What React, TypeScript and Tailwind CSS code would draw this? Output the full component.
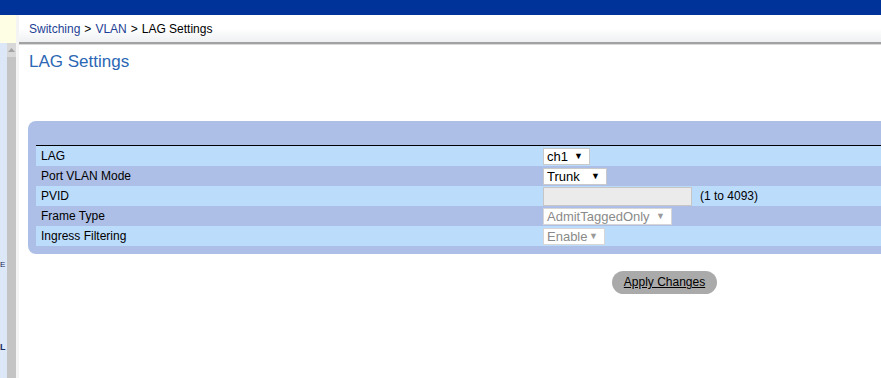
import React from 'react';

const rows = [
  { label: 'LAG', kind: 'lag' },
  { label: 'Port VLAN Mode', kind: 'mode' },
  { label: 'PVID', kind: 'pvid' },
  { label: 'Frame Type', kind: 'frame' },
  { label: 'Ingress Filtering', kind: 'ingress' },
];

const Select: React.FC<{ value: string; width: string; disabled?: boolean }> = ({ value, width, disabled }) => (
  <div
    className={`${width} h-[17px] bg-white border flex items-center justify-between pl-[3px] pr-[6px] text-[13px] leading-none ${
      disabled ? 'border-[#d6d6d6] text-[#8a8a8a]' : 'border-[#c9c9c9] text-black'
    }`}
  >
    <span>{value}</span>
    <span className={`text-[9px] ${disabled ? 'text-[#9a9a9a]' : 'text-black'}`}>▼</span>
  </div>
);

const App: React.FC = () => {
  const renderValue = (kind: string) => {
    switch (kind) {
      case 'lag':
        return <Select value="ch1" width="w-[47px]" />;
      case 'mode':
        return <Select value="Trunk" width="w-[64px]" />;
      case 'pvid':
        return (
          <div className="flex items-center gap-[8px]">
            <div className="w-[149px] h-[19px] bg-[#ebebeb] border border-[#c6c6c6]" />
            <span className="text-[12px] text-black">(1 to 4093)</span>
          </div>
        );
      case 'frame':
        return <Select value="AdmitTaggedOnly" width="w-[129px]" disabled />;
      default:
        return <Select value="Enable" width="w-[62px]" disabled />;
    }
  };

  return (
    <div className="w-[881px] h-[378px] flex flex-col overflow-hidden bg-white font-['Liberation_Sans',Arial,sans-serif]">
      {/* Top bar */}
      <div className="h-[15px] bg-[#003399] shrink-0" />

      <div className="flex flex-1 min-h-0">
        {/* Left nav edge */}
        <aside className="w-[16px] flex flex-col shrink-0">
          <div className="h-[28px] bg-[#fefee4]" />
          <div className="flex flex-1">
            <div className="w-[7px] bg-[#dce7f7] flex flex-col items-start">
              <span className="mt-[218px] text-[8px] leading-none text-[#1b2a5c]">E</span>
              <span className="mt-[74px] text-[9px] font-bold leading-none text-[#1b2a5c]">L</span>
            </div>
            <div className="w-[9px] bg-[#c4c4c4] flex flex-col items-center">
              <div className="w-full h-[14px] bg-[#d8d8d8] flex items-center justify-center">
                <svg width="7" height="4" viewBox="0 0 7 4">
                  <path d="M0 4 L3.5 0 L7 4 Z" fill="#a3a3a3" />
                </svg>
              </div>
            </div>
          </div>
        </aside>

        {/* Main */}
        <main className="flex-1 flex flex-col border-l-[3px] border-[#f4f4f4]">
          {/* Breadcrumb */}
          <div className="h-[27px] bg-gradient-to-b from-white via-white to-[#eef0f2] flex items-center pl-[10px] text-[12px]">
            <span className="text-[#1e3f96]">Switching</span>
            <span className="text-black mx-[4px]">&gt;</span>
            <span className="text-[#1e3f96]">VLAN</span>
            <span className="text-black mx-[4px]">&gt;</span>
            <span className="text-black">LAG Settings</span>
          </div>
          <div className="h-[2px] bg-[#a2a2a2]" />
          <div className="h-[1px] bg-[#d9d9d9]" />

          {/* Title */}
          <h1 className="pl-[10px] mt-[7px] text-[17px] leading-[20px] text-[#2a67b4]">LAG Settings</h1>

          {/* Panel */}
          <div className="ml-[9px] mt-[49px] bg-[#adbfe7] rounded-l-[8px] pl-[8px] pt-[24px] pb-[8px]">
            <div className="border-t border-black">
              {rows.map((r, i) => (
                <div
                  key={r.label}
                  className={`h-[20px] flex items-center ${i % 2 === 0 ? 'bg-[#bcdcfc]' : 'bg-[#adbfe7]'}`}
                >
                  <div className="w-[507px] pl-[5px] text-[12px] text-black">{r.label}</div>
                  {renderValue(r.kind)}
                </div>
              ))}
            </div>
          </div>

          {/* Button */}
          <div className="pl-[593px] mt-[15px]">
            <button className="w-[105px] h-[23px] rounded-full bg-[#aaaaaa] text-[12px] text-black underline">
              Apply Changes
            </button>
          </div>
        </main>
      </div>
    </div>
  );
};

export default App;
